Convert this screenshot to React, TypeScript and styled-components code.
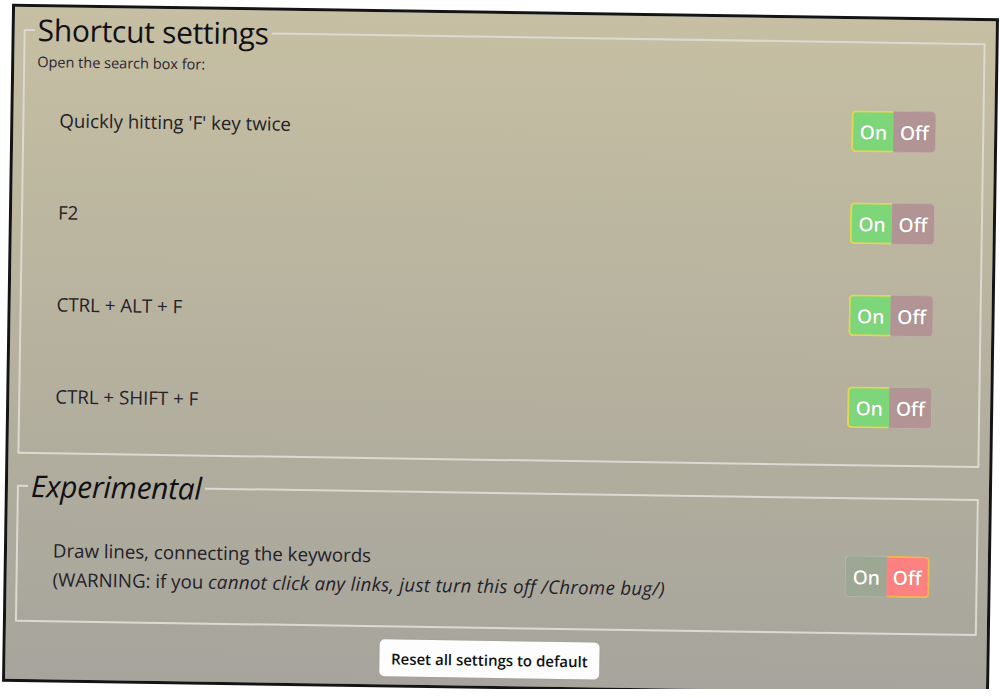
import React from "react";
import styled, { createGlobalStyle } from "styled-components";

const GlobalStyle = createGlobalStyle`
  html, body {
    margin: 0;
    padding: 0;
    background: #ffffff;
    overflow: hidden;
  }
  body {
    font-family: "Open Sans", "DejaVu Sans", sans-serif;
  }
`;

const Panel = styled.div`
  box-sizing: border-box;
  margin: 11px 0 0 7px;
  width: 987px;
  height: 678px;
  border: 3px solid #141414;
  background: linear-gradient(180deg, #c6bfa3 0%, #b8b39f 45%, #a6a49c 100%);
  transform: rotate(0.85deg);
  transform-origin: 50% 50%;
  overflow: hidden;
  display: flex;
  flex-direction: column;
  padding: 5px 10px 0 9px;
`;

const Group = styled.fieldset<{ $gapTop?: number; $padTop: number; $padBottom: number }>`
  margin: ${(p) => p.$gapTop ?? 0}px 0 0 0;
  padding: ${(p) => p.$padTop}px 12px ${(p) => p.$padBottom}px 12px;
  border: 2px solid #dbd9d2;
  border-radius: 1px;
  min-width: 0;
`;

const Legend = styled.legend<{ $italic?: boolean }>`
  padding: 0 3px;
  margin-left: -3px;
  font-family: "Open Sans", "DejaVu Sans", sans-serif;
  font-size: 30px;
  line-height: 36px;
  font-style: ${(p) => (p.$italic ? "italic" : "normal")};
  color: #111014;
  letter-spacing: -0.3px;
`;

const Intro = styled.div`
  margin-top: 5px;
  font-size: 14.5px;
  line-height: 18px;
  color: #2a2730;
`;

const Rows = styled.div<{ $top: number }>`
  display: flex;
  flex-direction: column;
  gap: 50px;
  margin-top: ${(p) => p.$top}px;
`;

const Row = styled.div`
  display: flex;
  align-items: center;
  justify-content: space-between;
  padding: 0 34px 0 23px;
  min-height: 42px;
`;

const Label = styled.div`
  font-size: 18.7px;
  line-height: 29px;
  color: #242129;
`;

const Em = styled.span`
  font-style: italic;
  letter-spacing: 0.3px;
`;

const Toggle = styled.div`
  display: flex;
  align-items: stretch;
  height: 42px;
`;

type Kind = "on" | "off";

const palette = {
  on: {
    active: { bg: "#7dd77a", border: "#e3d652" },
    idle: { bg: "#9ca794", border: "#b7bcae" },
  },
  off: {
    active: { bg: "#fd8181", border: "#efb84c" },
    idle: { bg: "#b29494", border: "#c2aeaa" },
  },
};

const Half = styled.div<{ $kind: Kind; $active: boolean }>`
  box-sizing: border-box;
  width: ${(p) => (p.$kind === "on" ? 42 : 43)}px;
  display: flex;
  align-items: center;
  justify-content: center;
  background: ${(p) => palette[p.$kind][p.$active ? "active" : "idle"].bg};
  border: ${(p) => (p.$active ? 2 : 1.5)}px solid
    ${(p) => palette[p.$kind][p.$active ? "active" : "idle"].border};
  border-radius: ${(p) => (p.$kind === "on" ? "5px 2px 2px 5px" : "2px 5px 5px 2px")};
  ${(p) => (p.$kind === "on" ? "border-right: none;" : "border-left: none;")}
  color: #ffffff;
  font-size: 19.5px;
  font-weight: 600;
  letter-spacing: -0.2px;
  text-shadow: 0 0 1px rgba(0, 0, 0, 0.25);
`;

const Footer = styled.div`
  display: flex;
  justify-content: center;
  padding-right: 12px;
  margin-top: 12px;
`;

const ResetButton = styled.button`
  box-sizing: border-box;
  width: 220px;
  height: 37px;
  border: none;
  border-radius: 5px;
  background: #fdfdfd;
  color: #111111;
  font-family: "Open Sans", "DejaVu Sans", sans-serif;
  font-size: 15px;
  font-weight: 600;
  cursor: pointer;
  box-shadow: 0 0 1px rgba(0, 0, 0, 0.2);
`;

const Switch: React.FC<{ on: boolean }> = ({ on }) => (
  <Toggle>
    <Half $kind="on" $active={on}>On</Half>
    <Half $kind="off" $active={!on}>Off</Half>
  </Toggle>
);

const shortcuts = [
  "Quickly hitting 'F' key twice",
  "F2",
  "CTRL + ALT + F",
  "CTRL + SHIFT + F",
];

export default function App() {
  return (
    <>
      <GlobalStyle />
      <Panel>
        <Group $padTop={0} $padBottom={36}>
          <Legend>Shortcut settings</Legend>
          <Intro>Open the search box for:</Intro>
          <Rows $top={27}>
            {shortcuts.map((s) => (
              <Row key={s}>
                <Label>{s}</Label>
                <Switch on={true} />
              </Row>
            ))}
          </Rows>
        </Group>
        <Group $gapTop={14} $padTop={0} $padBottom={27}>
          <Legend $italic>Experimental</Legend>
          <Rows $top={31}>
            <Row>
              <Label>
                Draw lines, connecting the keywords
                <br />
                (WARNING: if you <Em>cannot click any links, just turn this off /Chrome bug/)</Em>
              </Label>
              <Switch on={false} />
            </Row>
          </Rows>
        </Group>
        <Footer>
          <ResetButton>Reset all settings to default</ResetButton>
        </Footer>
      </Panel>
    </>
  );
}
